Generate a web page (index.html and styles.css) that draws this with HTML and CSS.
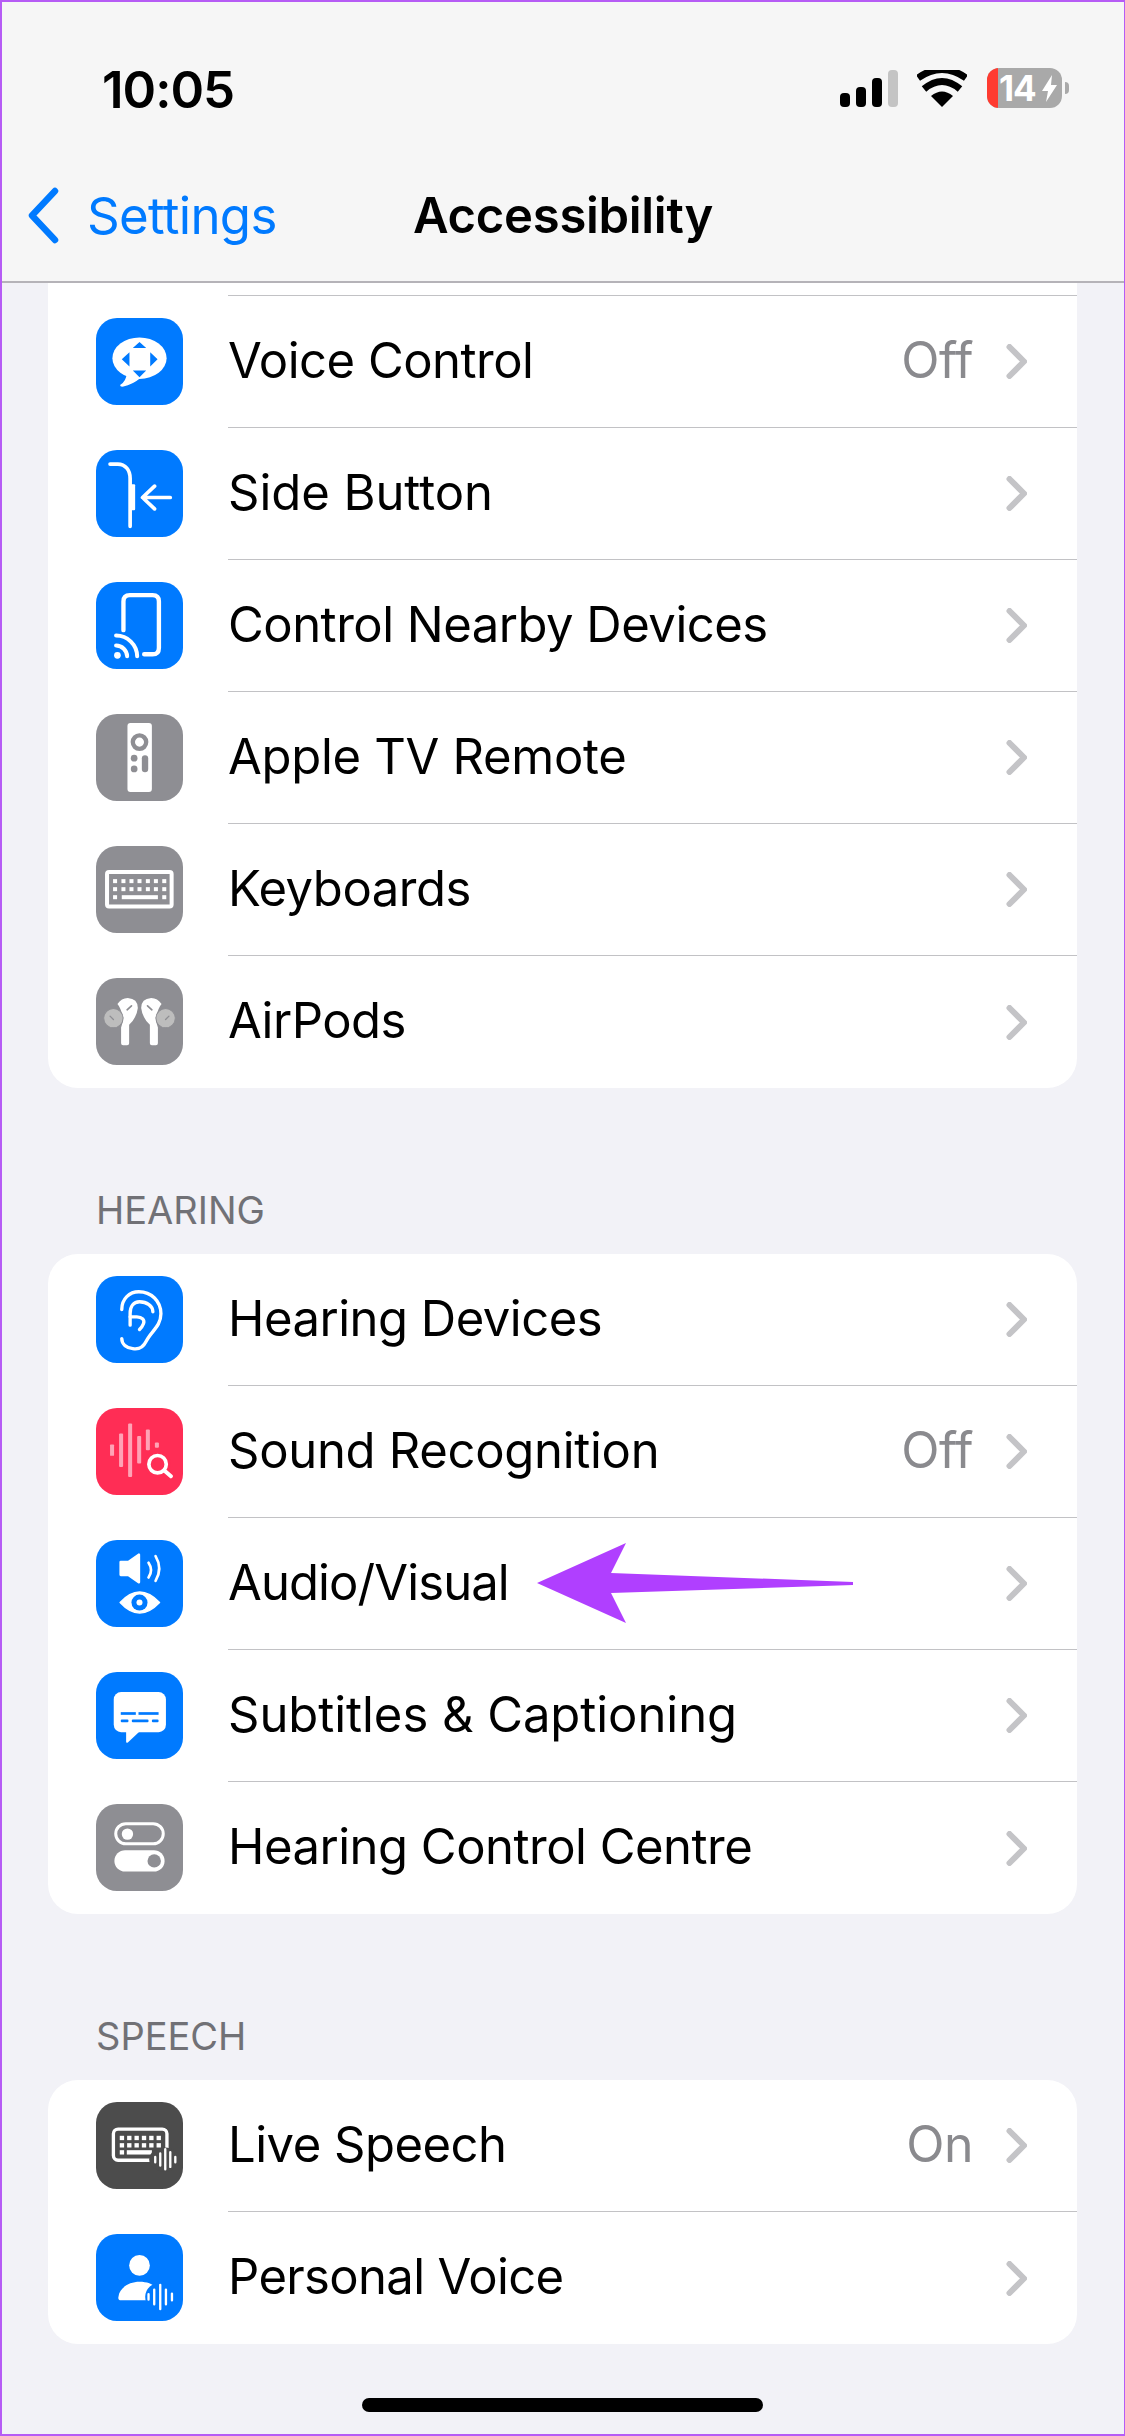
FILE: index.html
```html
<!DOCTYPE html>
<html lang="en">
<head>
<meta charset="utf-8">
<title>Accessibility</title>
<link rel="stylesheet" href="styles.css">
</head>
<body>
<div class="screen">
  <header class="top">
    <div class="status">
      <span class="time">10:05</span>
      <div class="status-icons">
        <svg class="signal" viewBox="0 0 58 37" width="58" height="37"><rect x="0" y="23" width="10" height="14" rx="4" fill="#000"/><rect x="16" y="17" width="10" height="20" rx="4" fill="#000"/><rect x="32" y="8" width="10" height="29" rx="4" fill="#000"/><rect x="48" y="0" width="10" height="37" rx="4" fill="#c4c4c4"/></svg>
        <svg class="wifi" viewBox="0 0 50 37" width="50" height="37"><path d="M25 37 L14 26 Q25 17 36 26 Z" fill="#000"/><path d="M7 19 Q25 4 43 19" fill="none" stroke="#000" stroke-width="7"/><path d="M1 8 Q25 -9 49 8" fill="none" stroke="#000" stroke-width="7"/></svg>
        <div class="battery">
          <div class="batt-body">
            <span class="batt-red"></span>
            <span class="batt-num">14</span>
            <svg class="bolt" viewBox="0 0 15 27" width="15" height="27"><path d="M10 0 L0 16 H6 L4 27 L15 10 H9 Z" fill="#fff"/></svg>
          </div>
          <span class="batt-tip"></span>
        </div>
      </div>
    </div>
    <nav class="nav">
      <a class="back">
        <svg viewBox="0 0 33 57" width="33" height="57"><path d="M28 4 L5 28.5 L28 53" fill="none" stroke="#007aff" stroke-width="6.5" stroke-linecap="round" stroke-linejoin="round"/></svg>
        <span>Settings</span>
      </a>
      <h1 class="title">Accessibility</h1>
      <span></span>
    </nav>
  </header>

  <main class="content">
    <section class="card">
      <div class="stub"></div>
      <div class="row">
        <span class="icon blue"><svg viewBox="0 0 260 260"><ellipse cx="130" cy="120" rx="81" ry="62" fill="#fff"/><path d="M92 165 Q90 190 72 200 Q72 207 82 205 Q108 200 135 178 Z" fill="#fff"/><path d="M130 72 L110 90 H150 Z M130 177 L110 157 H150 Z M77 123 L100 102 V145 Z M184 123 L162 102 V145 Z" fill="#007aff"/></svg></span>
        <div class="row-body"><span class="label">Voice Control</span><span class="value">Off</span><svg class="chev" viewBox="0 0 21 35"><path d="M3.5 3 L18 17.5 L3.5 32" /></svg></div>
      </div>
      <div class="row">
        <span class="icon blue"><svg viewBox="0 0 260 260"><path d="M42 42 H65 C88 42 102 60 102 85 V228" fill="none" stroke="#fff" stroke-width="11" stroke-linecap="round"/><rect x="100" y="102" width="17" height="78" rx="3" fill="#fff"/><path d="M222 142 H140 M175 108 L139 142 L175 176" fill="none" stroke="#fff" stroke-width="11" stroke-linecap="round" stroke-linejoin="round"/></svg></span>
        <div class="row-body"><span class="label wide">Side Button</span><svg class="chev" viewBox="0 0 21 35"><path d="M3.5 3 L18 17.5 L3.5 32" /></svg></div>
      </div>
      <div class="row">
        <span class="icon blue"><svg viewBox="0 0 260 260"><path d="M82 144 V58 Q82 39 101 39 H169 Q188 39 188 58 V197 Q188 216 169 216 H144" fill="none" stroke="#fff" stroke-width="13" stroke-linecap="round"/><circle cx="64" cy="219" r="10" fill="#fff"/><path d="M60 190 A33 33 0 0 1 93 222 M60 160 A63 63 0 0 1 123 222" fill="none" stroke="#fff" stroke-width="12" stroke-linecap="round"/></svg></span>
        <div class="row-body"><span class="label">Control Nearby Devices</span><svg class="chev" viewBox="0 0 21 35"><path d="M3.5 3 L18 17.5 L3.5 32" /></svg></div>
      </div>
      <div class="row">
        <span class="icon grey"><svg viewBox="0 0 260 260"><rect x="94" y="27" width="73" height="206" rx="9" fill="#fff"/><circle cx="130" cy="84" r="20" fill="none" stroke="#8e8e93" stroke-width="13"/><circle cx="114" cy="132" r="10" fill="#8e8e93"/><circle cx="114" cy="164" r="10" fill="#8e8e93"/><rect x="137" y="123" width="19" height="51" rx="9.5" fill="#8e8e93"/></svg></span>
        <div class="row-body"><span class="label slight">Apple TV Remote</span><svg class="chev" viewBox="0 0 21 35"><path d="M3.5 3 L18 17.5 L3.5 32" /></svg></div>
      </div>
      <div class="row">
        <span class="icon grey"><svg viewBox="0 0 260 260"><rect x="33" y="78" width="193" height="103" rx="6" fill="none" stroke="#fff" stroke-width="12"/><g fill="#fff"><rect x="51" y="99" width="12" height="12"/><rect x="76" y="99" width="12" height="12"/><rect x="100" y="99" width="12" height="12"/><rect x="124" y="99" width="12" height="12"/><rect x="149" y="99" width="12" height="12"/><rect x="173" y="99" width="12" height="12"/><rect x="198" y="99" width="12" height="12"/><rect x="51" y="123" width="12" height="12"/><rect x="76" y="123" width="12" height="12"/><rect x="100" y="123" width="12" height="12"/><rect x="124" y="123" width="12" height="12"/><rect x="149" y="123" width="12" height="12"/><rect x="173" y="123" width="12" height="12"/><rect x="198" y="123" width="12" height="12"/><rect x="51" y="147" width="12" height="12"/><rect x="77" y="147" width="108" height="12"/><rect x="198" y="147" width="12" height="12"/></g></svg></span>
        <div class="row-body"><span class="label">Keyboards</span><svg class="chev" viewBox="0 0 21 35"><path d="M3.5 3 L18 17.5 L3.5 32" /></svg></div>
      </div>
      <div class="row">
        <span class="icon grey"><svg viewBox="0 0 260 260"><g id="bud"><path d="M64 78 Q76 60 95 60 Q125 62 125 90 Q122 118 99 140 V195 Q99 201 93 201 H81 Q75 201 75 195 V148 Q82 130 80 118 Q75 90 64 78 Z" fill="#fff"/><circle cx="52" cy="120" r="29" fill="#bdbdbd" stroke="#8e8e93" stroke-width="3"/><path d="M42 114 L52 124" stroke="#8e8e93" stroke-width="4" stroke-linecap="round"/><path d="M93 95 L106 83" stroke="#8e8e93" stroke-width="5" stroke-linecap="round"/></g><use href="#bud" transform="translate(260 0) scale(-1 1)"/></svg></span>
        <div class="row-body last"><span class="label">AirPods</span><svg class="chev" viewBox="0 0 21 35"><path d="M3.5 3 L18 17.5 L3.5 32" /></svg></div>
      </div>
    </section>

    <h2 class="section-title">HEARING</h2>
    <section class="card">
      <div class="row">
        <span class="icon blue"><svg viewBox="0 0 260 260" fill="none" stroke="#fff" stroke-width="10" stroke-linecap="round"><path d="M77 100 C77 68 100 47 128 47 C165 47 194 75 194 113 C194 150 165 165 150 195 C140 215 125 220 110 217 C92 215 77 205 77 187"/><path d="M102 147 V112 C102 92 112 77 130 77 C152 77 170 90 170 107"/><path d="M102 122 H122 C138 122 146 132 142 142 Q138 152 130 160"/></svg></span>
        <div class="row-body"><span class="label">Hearing Devices</span><svg class="chev" viewBox="0 0 21 35"><path d="M3.5 3 L18 17.5 L3.5 32" /></svg></div>
      </div>
      <div class="row">
        <span class="icon red"><svg viewBox="0 0 260 260"><g fill="#ffa3b6"><rect x="42" y="109" width="12" height="34" rx="2"/><rect x="69" y="76" width="12" height="100" rx="3"/><rect x="96" y="46" width="12" height="160" rx="3"/><rect x="123" y="84" width="12" height="82" rx="3"/><rect x="149" y="64" width="12" height="62" rx="3"/><rect x="176" y="103" width="12" height="16" rx="3"/></g><circle cx="184" cy="168" r="40" fill="#ff2d55"/><circle cx="184" cy="168" r="26" fill="none" stroke="#fff" stroke-width="11"/><path d="M204 187 L224 204" stroke="#fff" stroke-width="12" stroke-linecap="round"/></svg></span>
        <div class="row-body"><span class="label slight">Sound Recognition</span><span class="value">Off</span><svg class="chev" viewBox="0 0 21 35"><path d="M3.5 3 L18 17.5 L3.5 32" /></svg></div>
      </div>
      <div class="row">
        <span class="icon blue"><svg viewBox="0 0 260 260"><path d="M74 66 H97 L128 44 V126 L97 104 H74 Z" fill="#fff" stroke="#fff" stroke-width="8" stroke-linejoin="round"/><path d="M157 68 Q172 90 157 112 M178 48 Q200 85 178 122" fill="none" stroke="#fff" stroke-width="8" stroke-linecap="round"/><path d="M72 187 Q130 124 190 187 Q130 250 72 187 Z" fill="#fff" stroke="#fff" stroke-width="4" stroke-linejoin="round"/><circle cx="130" cy="187" r="24" fill="#007aff"/><circle cx="130" cy="187" r="9" fill="#fff"/></svg></span>
        <div class="row-body"><span class="label tight">Audio/Visual</span><svg class="chev" viewBox="0 0 21 35"><path d="M3.5 3 L18 17.5 L3.5 32" /></svg></div>
      </div>
      <div class="row">
        <span class="icon blue"><svg viewBox="0 0 260 260"><rect x="53" y="60" width="156" height="120" rx="22" fill="#fff"/><path d="M90 175 V208 Q90 214 96 210 L130 178 Z" fill="#fff"/><g fill="#007aff"><rect x="74" y="120" width="45" height="8"/><rect x="127" y="120" width="60" height="8"/><rect x="74" y="142" width="23" height="8" rx="3"/><rect x="107" y="142" width="50" height="8" rx="3"/><rect x="167" y="142" width="20" height="8" rx="3"/></g></svg></span>
        <div class="row-body"><span class="label wide">Subtitles &amp; Captioning</span><svg class="chev" viewBox="0 0 21 35"><path d="M3.5 3 L18 17.5 L3.5 32" /></svg></div>
      </div>
      <div class="row">
        <span class="icon grey"><svg viewBox="0 0 260 260"><rect x="59" y="59" width="142" height="60" rx="30" fill="none" stroke="#fff" stroke-width="9"/><circle cx="94" cy="90" r="17" fill="#fff"/><rect x="55" y="138" width="150" height="64" rx="32" fill="#fff"/><circle cx="174" cy="170" r="20" fill="#8e8e93"/></svg></span>
        <div class="row-body last"><span class="label">Hearing Control Centre</span><svg class="chev" viewBox="0 0 21 35"><path d="M3.5 3 L18 17.5 L3.5 32" /></svg></div>
      </div>
    </section>

    <h2 class="section-title">SPEECH</h2>
    <section class="card">
      <div class="row">
        <span class="icon dark"><svg viewBox="0 0 260 260"><rect x="52" y="81" width="160" height="93" rx="14" fill="none" stroke="#fff" stroke-width="10"/><g fill="#fff"><rect x="71" y="101" width="13" height="13"/><rect x="93" y="101" width="13" height="13"/><rect x="115" y="101" width="13" height="13"/><rect x="137" y="101" width="13" height="13"/><rect x="159" y="101" width="13" height="13"/><rect x="181" y="101" width="13" height="13"/><rect x="71" y="123" width="13" height="13"/><rect x="93" y="123" width="13" height="13"/><rect x="115" y="123" width="13" height="13"/><rect x="137" y="123" width="13" height="13"/><rect x="159" y="123" width="13" height="13"/><rect x="181" y="123" width="13" height="13"/><rect x="71" y="144" width="13" height="13"/><rect x="92" y="144" width="75" height="13"/></g><ellipse cx="205" cy="172" rx="46" ry="36" fill="#4c4c4c"/><g stroke="#fff" stroke-width="7" stroke-linecap="round"><path d="M177 164 V180 M192 154 V190 M207 141 V201 M222 150 V194 M237 164 V180"/></g></svg></span>
        <div class="row-body"><span class="label">Live Speech</span><span class="value">On</span><svg class="chev" viewBox="0 0 21 35"><path d="M3.5 3 L18 17.5 L3.5 32" /></svg></div>
      </div>
      <div class="row">
        <span class="icon blue"><svg viewBox="0 0 260 260"><circle cx="130" cy="94" r="31" fill="#fff"/><path d="M67 188 C70 160 100 143 130 143 C160 143 185 155 190 180 V198 H75 Q65 198 67 188 Z" fill="#fff"/><ellipse cx="195" cy="188" rx="48" ry="44" fill="#007aff"/><g stroke="#fff" stroke-width="7" stroke-linecap="round"><path d="M157 180 V196 M174 166 V210 M192 152 V224 M209 166 V210 M227 178 V198"/></g></svg></span>
        <div class="row-body last"><span class="label slight-tight">Personal Voice</span><svg class="chev" viewBox="0 0 21 35"><path d="M3.5 3 L18 17.5 L3.5 32" /></svg></div>
      </div>
    </section>
  </main>

  <svg class="arrow" viewBox="0 0 320 84" width="320" height="84"><path d="M0 40 L89 0 L74 30 L316 39 V42 L74 50 L89 80 Z" fill="#b03fff"/></svg>
  <div class="home"></div>
</div>
</body>
</html>
```
FILE: styles.css
```css
* { box-sizing: border-box; }
html, body { margin: 0; padding: 0; }
body {
  width: 1125px;
  height: 2436px;
  overflow: hidden;
  font-family: Inter, "Liberation Sans", sans-serif;
  color: #000;
}
.screen {
  position: relative;
  width: 1125px;
  height: 2436px;
  border-style: solid;
  border-color: #b65cf5;
  border-width: 2px 1px 2px 2px;
  background: #f2f2f7;
  overflow: hidden;
}
.top {
  height: 281px;
  background: #f6f6f6;
  border-bottom: 2px solid #b5b3b8;
  display: flex;
  flex-direction: column;
}
.status {
  height: 133px;
  padding: 66px 55px 0 100px;
  display: flex;
  justify-content: space-between;
  align-items: flex-start;
}
.time {
  font-size: 51px;
  line-height: 44px;
  font-weight: 600;
  letter-spacing: -1px;
}
.status-icons {
  display: flex;
  align-items: center;
}
.signal { display: block; margin-right: 19px; }
.wifi { display: block; margin-right: 20px; }
.battery { display: flex; align-items: center; }
.batt-body {
  position: relative;
  width: 75px;
  height: 40px;
  border-radius: 12px;
  background: #a9a9a9;
  overflow: hidden;
  display: flex;
  align-items: center;
  padding-left: 12px;
  gap: 6px;
}
.batt-red {
  position: absolute;
  left: 0;
  top: 0;
  bottom: 0;
  width: 11px;
  background: #ff3b30;
}
.batt-num {
  color: #fff;
  font-size: 35px;
  font-weight: 700;
  line-height: 40px;
  letter-spacing: -1px;
}
.bolt { display: block; }
.batt-tip {
  width: 4px;
  height: 12px;
  margin-left: 3px;
  background: #a9a9a9;
  border-radius: 0 4px 4px 0;
}
.nav {
  flex: 1;
  display: grid;
  grid-template-columns: 1fr auto 1fr;
  align-items: center;
  padding-top: 15px;
}
.back {
  display: flex;
  align-items: center;
  gap: 27px;
  margin-left: 25px;
  color: #007aff;
  font-size: 51px;
  letter-spacing: -0.7px;
}
.back svg { display: block; }
.title {
  margin: 0;
  font-size: 49px;
  font-weight: 600;
  letter-spacing: -0.3px;
}
.content { padding: 0 47px 0 46px; }
.card {
  background: #fff;
  border-radius: 0 0 30px 30px;
  overflow: hidden;
}
.section-title + .card { border-radius: 30px; }
.stub {
  height: 13px;
  margin-left: 180px;
  border-bottom: 1px solid #c2c2c5;
}
.row {
  height: 132px;
  display: flex;
  align-items: stretch;
}
.icon {
  flex: none;
  width: 87px;
  height: 87px;
  margin: 22px 45px 0 48px;
  border-radius: 21px;
  display: block;
}
.icon svg { display: block; width: 87px; height: 87px; }
.blue { background: #007aff; }
.grey { background: #8e8e93; }
.red { background: #ff2d55; }
.dark { background: #4c4c4c; }
.row-body {
  flex: 1;
  display: flex;
  align-items: center;
  border-bottom: 1px solid #c2c2c5;
  padding-right: 50px;
}
.row-body.last { border-bottom: 0; }
.label {
  flex: 1;
  margin-bottom: 3px;
  font-size: 49px;
  letter-spacing: -0.5px;
}
.label.wide { letter-spacing: -0.05px; }
.label.slight { letter-spacing: -0.3px; }
.label.slight-tight { letter-spacing: -0.65px; }
.label.tight { letter-spacing: -0.9px; }
.value {
  color: #8a8a8e;
  font-size: 50px;
  letter-spacing: -0.5px;
  margin: 0 33px 3px 0;
}
.chev {
  flex: none;
  width: 21px;
  height: 35px;
  fill: none;
  stroke: #c4c4c7;
  stroke-width: 6;
  stroke-linecap: round;
  stroke-linejoin: round;
}
.section-title {
  margin: 0;
  height: 166px;
  padding: 100px 0 0 48px;
  font-size: 38px;
  font-weight: 400;
  line-height: 44px;
  color: #717176;
}
.arrow {
  position: absolute;
  left: 535px;
  top: 1541px;
}
.home {
  position: absolute;
  left: 360px;
  top: 2396px;
  width: 401px;
  height: 14px;
  border-radius: 7px;
  background: #000;
}
```
